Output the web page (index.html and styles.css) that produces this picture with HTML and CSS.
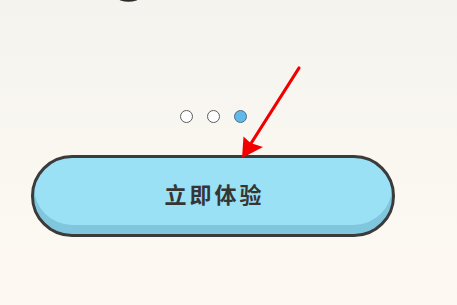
FILE: index.html
```html
<!DOCTYPE html>
<html lang="zh">
<head>
<meta charset="utf-8">
<link rel="stylesheet" href="styles.css">
</head>
<body>
<div class="page">
  <div class="hero">
    <svg class="hero-art" width="426" height="110" viewBox="0 0 426 110">
      <ellipse cx="128.5" cy="-1.5" rx="10" ry="3.2" fill="#2a2a2a"/>
    </svg>
  </div>
  <div class="dots">
    <span class="dot"></span>
    <span class="dot"></span>
    <span class="dot active"></span>
  </div>
  <button class="cta">立即体验</button>
</div>
<svg class="arrow" width="457" height="305" viewBox="0 0 457 305">
  <line x1="299" y1="68" x2="250" y2="145" stroke="#f20000" stroke-width="3.2" stroke-linecap="round"/>
  <polygon points="242,158 243.5,136.5 250.5,143 263,147" fill="#f20000"/>
</svg>
</body>
</html>
```
FILE: styles.css
```css
html, body {
  margin: 0;
  padding: 0;
}
body {
  width: 457px;
  height: 305px;
  overflow: hidden;
  background: linear-gradient(180deg, #f4f3ee 0%, #faf7f1 50%, #fdf8f2 100%);
  font-family: "Noto Sans CJK SC", "Noto Sans", sans-serif;
}
.page {
  width: 426px;
  display: flex;
  flex-direction: column;
  align-items: center;
}
.hero {
  height: 110px;
  width: 100%;
}
.hero-art {
  display: block;
}
.dots {
  display: flex;
  gap: 14px;
  height: 13px;
}
.dot {
  width: 13px;
  height: 13px;
  box-sizing: border-box;
  border-radius: 50%;
  border: 1.5px solid #5c5c5c;
  background: #ffffff;
}
.dot.active {
  background: #63b8ea;
  border-color: #4a6f85;
}
.cta {
  margin-top: 32px;
  width: 364px;
  height: 82px;
  box-sizing: border-box;
  border: 3px solid #3b3b3b;
  border-radius: 41px;
  background: #9be1f6;
  box-shadow: inset 0 -9px 0 #80c6dc;
  font-family: "Noto Sans CJK SC", "Noto Sans", sans-serif;
  font-size: 22px;
  font-weight: 700;
  letter-spacing: 3px;
  color: #353535;
  padding: 0 0 6px 3px;
  line-height: 1;
}
.arrow {
  position: absolute;
  left: 0;
  top: 0;
  pointer-events: none;
}
```
